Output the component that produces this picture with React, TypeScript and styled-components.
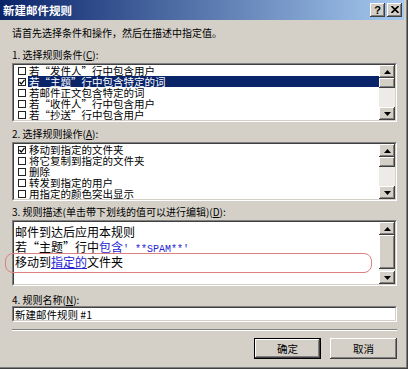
import React from "react";
import styled, { createGlobalStyle } from "styled-components";

const GlobalStyle = createGlobalStyle`
  html, body { margin: 0; padding: 0; background: #d4d0c8; }
  body { font-family: "Noto Sans CJK SC", "Liberation Sans", sans-serif; color: #000; }
  * { box-sizing: border-box; }
`;

const Window = styled.div`
  width: 408px;
  height: 369px;
  background: #d4d0c8;
  padding: 0 4px 4px 0;
  box-shadow: inset -1px -1px 0 #404040, inset -2px -2px 0 #808080;
  display: flex;
  flex-direction: column;
  overflow: hidden;
`;

const TitleBar = styled.div`
  height: 20px;
  flex: none;
  display: flex;
  align-items: center;
  justify-content: space-between;
  padding: 0 2px 0 3px;
  background: linear-gradient(to right, #0a246a, #a6caf0);
`;

const TitleText = styled.span`
  color: #fff;
  font-weight: 700;
  font-size: 11.5px;
  line-height: 14px;
`;

const CaptionGroup = styled.div`
  display: flex;
  gap: 2px;
`;

const CaptionButton = styled.div`
  width: 15px;
  height: 14px;
  background: #d4d0c8;
  box-shadow: inset -1px -1px 0 #404040, inset 1px 1px 0 #fff, inset -2px -2px 0 #808080;
  display: flex;
  align-items: center;
  justify-content: center;
  font-family: "Liberation Sans", sans-serif;
  font-weight: 700;
  font-size: 11px;
  line-height: 12px;
  padding-bottom: 1px;
`;

const Body = styled.div`
  flex: 1;
  display: flex;
  flex-direction: column;
  padding: 0 7px 0 12px;
`;

const Label = styled.div<{ $top: number }>`
  margin-top: ${(p) => p.$top}px;
  font-size: 10px;
  line-height: 12px;
  height: 12px;
  white-space: nowrap;
`;

const Sunken = styled.div<{ $height: number; $top?: number }>`
  margin-top: ${(p) => p.$top ?? 2}px;
  height: ${(p) => p.$height}px;
  border: 1px solid;
  border-color: #808080 #fff #fff #808080;
  flex: none;
`;

const SunkenInner = styled.div`
  height: 100%;
  border: 1px solid;
  border-color: #404040 #d4d0c8 #d4d0c8 #404040;
  background: #fff;
  display: flex;
  position: relative;
`;

const Rows = styled.div`
  flex: 1;
`;

const Row = styled.div`
  display: flex;
  align-items: center;
  height: 11px;
  font-size: 10.5px;
  line-height: 11px;
  white-space: nowrap;
`;

const Check = styled.span`
  width: 8px;
  height: 8px;
  margin: 0 2px 0 4px;
  border: 1px solid #222;
  flex: none;
  display: flex;
  align-items: center;
  justify-content: center;
  background: #fff;
`;

const RowText = styled.span<{ $selected?: boolean }>`
  flex: 1;
  display: block;
  height: 11px;
  line-height: 11px;
  padding-left: 1px;
  background: ${(p) => (p.$selected ? "#0a246a" : "transparent")};
  color: ${(p) => (p.$selected ? "#fff" : "#000")};
`;

const ScrollBar = styled.div`
  width: 16px;
  flex: none;
  display: flex;
  flex-direction: column;
  background: #ecebe7;
`;

const ScrollButton = styled.div`
  height: 13px;
  flex: none;
  background: #d4d0c8;
  box-shadow: inset -1px -1px 0 #404040, inset 1px 1px 0 #fff, inset -2px -2px 0 #808080;
  display: flex;
  align-items: center;
  justify-content: center;
`;

const Thumb = styled.div<{ $h: number }>`
  height: ${(p) => p.$h}px;
  flex: none;
  background: #d4d0c8;
  box-shadow: inset -1px -1px 0 #404040, inset 1px 1px 0 #fff, inset -2px -2px 0 #808080;
`;

const Track = styled.div`
  flex: 1;
`;

const DescText = styled.div`
  flex: 1;
  padding: 2px 0 0 1px;
  font-size: 12px;
  line-height: 15px;
  white-space: nowrap;
`;

const DescLine = styled.div`
  height: 15px;
`;

const Link = styled.span`
  color: #2424d6;
  text-decoration: underline;
  text-underline-offset: 1px;
`;

const Half = styled.span`
  font-family: "Liberation Mono", monospace;
  font-size: 10px;
`;

const Highlight = styled.div`
  position: absolute;
  left: -9px;
  top: 31px;
  width: 367px;
  height: 20px;
  border: 1px solid #dc8080;
  border-radius: 8px;
  pointer-events: none;
`;

const Input = styled.div`
  height: 100%;
  border: 1px solid;
  border-color: #404040 #d4d0c8 #d4d0c8 #404040;
  background: #fff;
  font-size: 10.5px;
  line-height: 13px;
  padding-left: 1px;
  white-space: nowrap;
`;

const Separator = styled.div`
  margin-top: 7px;
  height: 2px;
  border-top: 1px solid #808080;
  border-bottom: 1px solid #fff;
  flex: none;
`;

const ButtonRow = styled.div`
  margin-top: 7px;
  display: flex;
  justify-content: flex-end;
  gap: 9px;
`;

const Button = styled.div<{ $default?: boolean }>`
  width: 67px;
  height: 21px;
  background: #d4d0c8;
  display: flex;
  align-items: center;
  justify-content: center;
  font-size: 10.5px;
  border: ${(p) => (p.$default ? "1px solid #000" : "none")};
  box-shadow: inset -1px -1px 0 #404040, inset 1px 1px 0 #fff, inset -2px -2px 0 #808080;
`;

const UpArrow = () => (
  <svg width="7" height="4" viewBox="0 0 7 4">
    <polygon points="3.5,0 7,4 0,4" fill="#000" />
  </svg>
);
const DownArrow = () => (
  <svg width="7" height="4" viewBox="0 0 7 4">
    <polygon points="0,0 7,0 3.5,4" fill="#000" />
  </svg>
);

const Scroll = ({ thumb }: { thumb: number }) => (
  <ScrollBar>
    <ScrollButton>
      <UpArrow />
    </ScrollButton>
    <Thumb $h={thumb} />
    <Track />
    <ScrollButton>
      <DownArrow />
    </ScrollButton>
  </ScrollBar>
);

type Item = { text: string; checked?: boolean; selected?: boolean };

const CheckMark = () => (
  <svg width="6" height="6" viewBox="0 0 6 6">
    <polyline points="0.5,3 2.3,5 5.5,0.8" fill="none" stroke="#000" strokeWidth="1.2" />
  </svg>
);

const CheckList = ({ items }: { items: Item[] }) => (
  <Sunken $height={59}>
    <SunkenInner>
      <Rows>
        {items.map((it) => (
          <Row key={it.text}>
            <Check>{it.checked && <CheckMark />}</Check>
            <RowText $selected={it.selected}>{it.text}</RowText>
          </Row>
        ))}
      </Rows>
      <Scroll thumb={10} />
    </SunkenInner>
  </Sunken>
);

const conditions: Item[] = [
  { text: "若“发件人”行中包含用户" },
  { text: "若“主题”行中包含特定的词", checked: true, selected: true },
  { text: "若邮件正文包含特定的词" },
  { text: "若“收件人”行中包含用户" },
  { text: "若“抄送”行中包含用户" },
];

const actions: Item[] = [
  { text: "移动到指定的文件夹", checked: true },
  { text: "将它复制到指定的文件夹" },
  { text: "删除" },
  { text: "转发到指定的用户" },
  { text: "用指定的颜色突出显示" },
];

const CloseGlyph = () => (
  <svg width="8" height="7" viewBox="0 0 8 7">
    <path d="M0.5 0 L7.5 7 M7.5 0 L0.5 7" stroke="#000" strokeWidth="1.6" />
  </svg>
);

export default function App() {
  return (
    <>
      <GlobalStyle />
      <Window>
        <TitleBar>
          <TitleText>新建邮件规则</TitleText>
          <CaptionGroup>
            <CaptionButton>?</CaptionButton>
            <CaptionButton>
              <CloseGlyph />
            </CaptionButton>
          </CaptionGroup>
        </TitleBar>
        <Body>
          <Label $top={7}>请首先选择条件和操作，然后在描述中指定值。</Label>
          <Label $top={10}>
            1. 选择规则条件(<u>C</u>):
          </Label>
          <CheckList items={conditions} />
          <Label $top={6}>
            2. 选择规则操作(<u>A</u>):
          </Label>
          <CheckList items={actions} />
          <Label $top={5}>
            3. 规则描述(单击带下划线的值可以进行编辑)(<u>D</u>):
          </Label>
          <Sunken $height={66}>
            <SunkenInner>
              <DescText>
                <DescLine>邮件到达后应用本规则</DescLine>
                <DescLine>
                  若“主题”行中
                  <Link>
                    包含<Half>' **SPAM**'</Half>
                  </Link>
                </DescLine>
                <DescLine>
                  移动到<Link>指定的</Link>文件夹
                </DescLine>
              </DescText>
              <Scroll thumb={34} />
              <Highlight />
            </SunkenInner>
          </Sunken>
          <Label $top={8}>
            4. 规则名称(<u>N</u>):
          </Label>
          <Sunken $height={16} $top={0}>
            <Input>新建邮件规则 #1</Input>
          </Sunken>
          <Separator />
          <ButtonRow>
            <Button $default>确定</Button>
            <Button>取消</Button>
          </ButtonRow>
        </Body>
      </Window>
    </>
  );
}
